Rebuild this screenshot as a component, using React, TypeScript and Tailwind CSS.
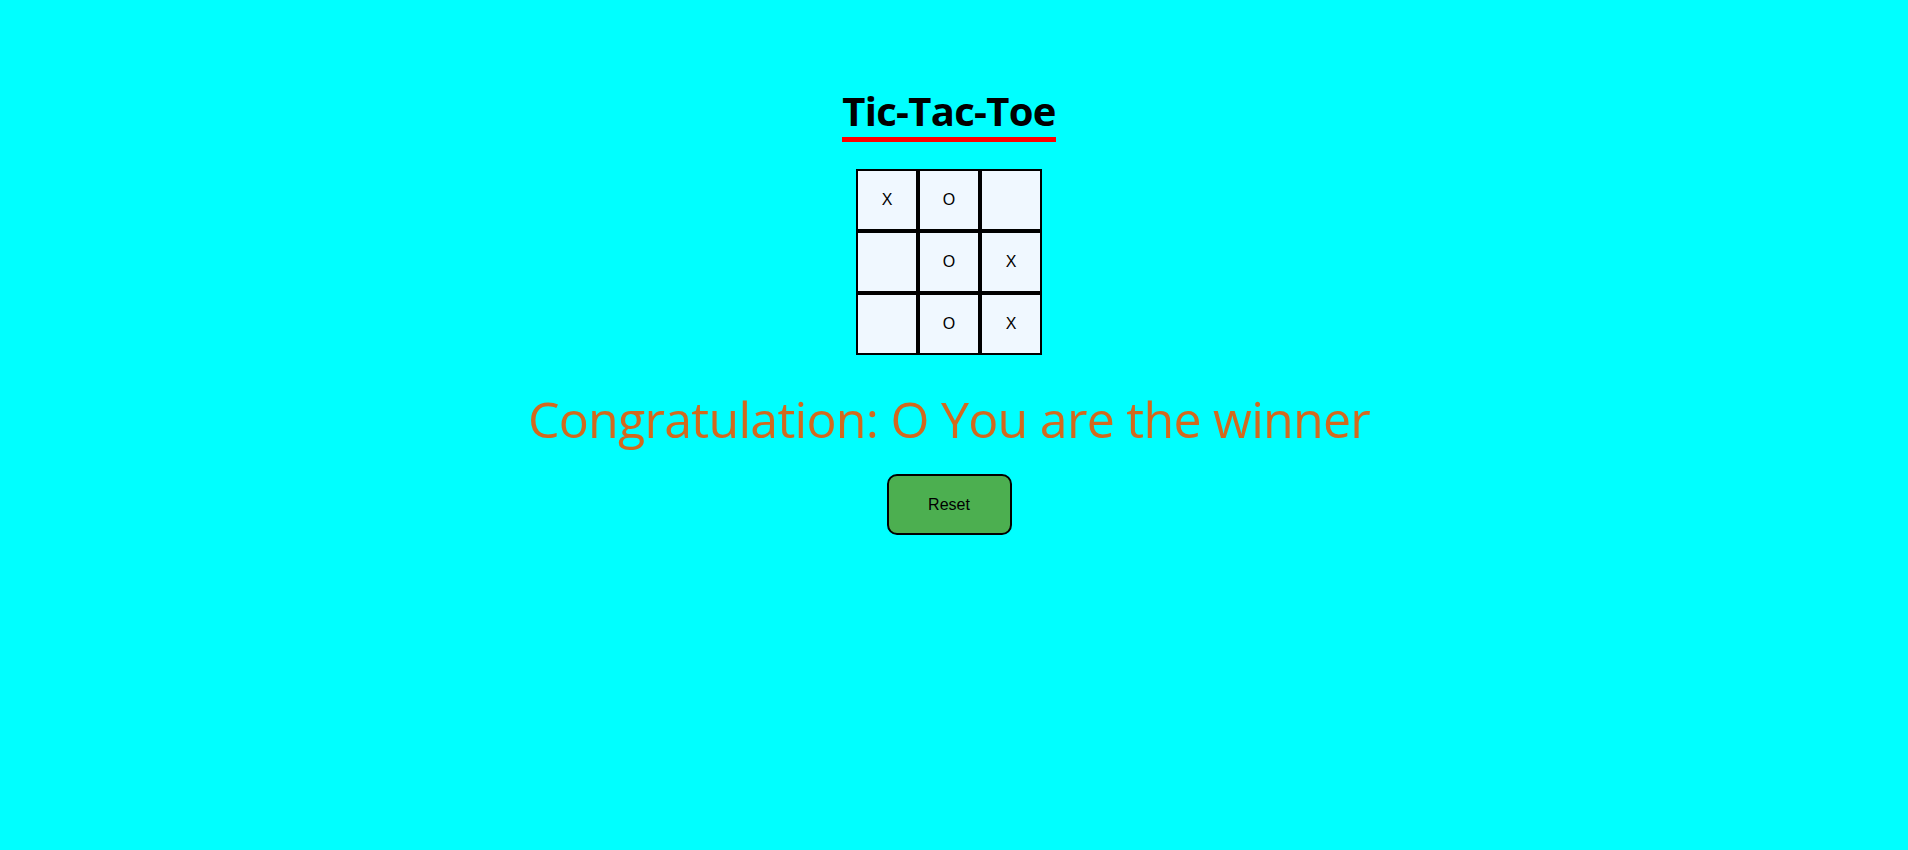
import { useState } from "react";

const start = ["X", "O", "", "", "O", "X", "", "O", "X"];

export default function App() {
    const [board, setBoard] = useState<string[]>(start)
    const [winner, setWinner] = useState<string>("O")

    const reset = () => {
        setBoard(Array(9).fill(""))
        setWinner("")
    }

    return (
        <div className="min-h-[850px] w-full bg-[#00ffff] pr-[10px]">
            <div className="flex flex-col items-center">
                <h1 className="mt-[88px] pb-[3px] border-b-[5px] border-[#ff0000] text-[40px] leading-[46px] font-bold tracking-[-0.7px] text-black font-['Open_Sans',sans-serif]">
                    Tic-Tac-Toe
                </h1>

                <div className="mt-[27px] grid grid-cols-3">
                    {board.map((cell, i) => (
                        <div
                            key={i}
                            className="w-[62px] h-[62px] border-2 border-black bg-[#f0f8ff] flex items-center justify-center text-[16px] text-black font-['Liberation_Sans',Arial,sans-serif]"
                        >
                            {cell}
                        </div>
                    ))}
                </div>

                <h2 className="mt-[34px] h-[60px] text-[50px] leading-[60px] tracking-[-0.7px] text-[#d2691e] font-['Open_Sans',sans-serif]">
                    {winner && `Congratulation: ${winner} You are the winner`}
                </h2>

                <button
                    onClick={reset}
                    className="mt-[25px] w-[125px] h-[61px] border-2 border-black rounded-[10px] bg-[#4caf50] text-[16px] text-black font-['Liberation_Sans',Arial,sans-serif]"
                >
                    Reset
                </button>
            </div>
        </div>
    )
}
